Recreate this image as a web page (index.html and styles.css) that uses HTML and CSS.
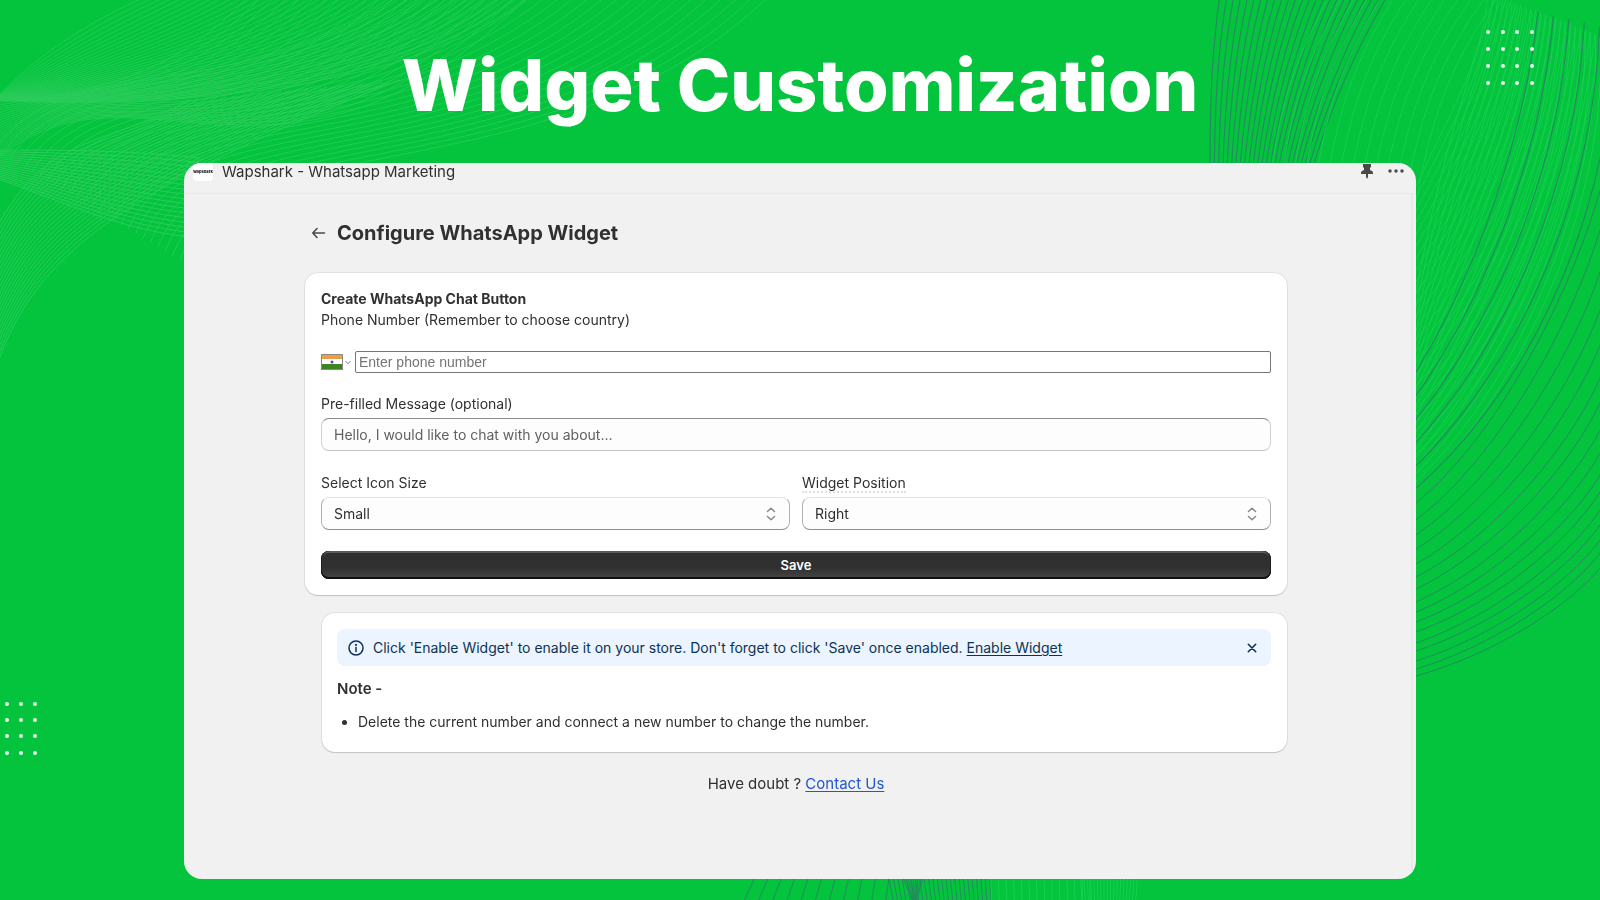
FILE: index.html
```html
<!DOCTYPE html>
<html lang="en">
<head>
<meta charset="utf-8">
<meta name="viewport" content="width=device-width, initial-scale=1">
<title>Widget Customization</title>
<link rel="stylesheet" href="styles.css">
</head>
<body class="page">
<svg class="backdrop" id="backdrop" viewBox="0 0 1600 900" preserveAspectRatio="xMidYMid slice" aria-hidden="true"></svg>
<h1 class="hero">Widget Customization</h1>
<main class="window">
  <header class="topbar">
    <span class="applogo">wapshark</span>
    <span class="appname">Wapshark - Whatsapp Marketing</span>
    <button class="iconbtn" type="button" aria-label="Pin">
      <svg width="12" height="16" viewBox="0 0 12 16"><path fill="#4a4a4a" d="M2 1h8v3l-1 1v2l2 1q1 .6 1 2v1H7v3l-1 2-1-2v-3H0v-1q0-1.400 1-2l2-1V5L2 4z"/></svg>
    </button>
    <button class="iconbtn" type="button" aria-label="More actions">
      <svg width="16" height="16" viewBox="0 0 16 16" fill="#4a4a4a"><circle cx="2" cy="8" r="1.700"/><circle cx="8" cy="8" r="1.700"/><circle cx="14" cy="8" r="1.700"/></svg>
    </button>
  </header>
  <div class="scroller">
    <div class="content">
      <div class="titlebar">
        <button class="iconbtn" type="button" aria-label="Back">
          <svg width="15" height="16" viewBox="0 0 15 16" fill="none" stroke="#4a4a4a" stroke-width="1.600" stroke-linecap="round" stroke-linejoin="round"><path d="M13.500 8H2M6 3.500 1.800 8 6 12.500"/></svg>
        </button>
        <h2 class="title">Configure WhatsApp Widget</h2>
      </div>
      <form class="card">
        <h3 class="cardtitle">Create WhatsApp Chat Button</h3>
        <label class="label" for="phone">Phone Number (Remember to choose country)</label>
        <div class="phone">
          <button class="country" type="button" aria-label="Country: India">
            <svg width="22" height="16" viewBox="0 0 22 16"><path fill="#f29b46" d="M0 0h22v5H0z"/><path fill="#fff" d="M0 5h22v5H0z"/><path fill="#3c8424" d="M0 10h22v6H0z"/><circle cx="11" cy="8" r="1.500" fill="#4a4ab8"/><path fill="none" stroke="#8a8a8a" d="M.5.5h21v15H.5z"/></svg>
            <svg width="6" height="6" viewBox="0 0 6 6"><path fill="none" stroke="#888" d="M.5 2 3 4.800 5.500 2"/></svg>
          </button>
          <input class="tel" id="phone" type="tel" placeholder="Enter phone number">
        </div>
        <label class="label" for="message">Pre-filled Message (optional)</label>
        <input class="field message" id="message" type="text" placeholder="Hello, I would like to chat with you about...">
        <div class="pair">
          <div class="group">
            <label class="label" for="size">Select Icon Size</label>
            <div class="choice">
              <select class="field" id="size"><option>Small</option><option>Medium</option><option>Large</option></select>
              <svg class="updown" width="10" height="14" viewBox="0 0 10 14"><path d="M1.500 4.500 5 1.200l3.500 3.300M1.500 9.500 5 12.800l3.500-3.300"/></svg>
            </div>
          </div>
          <div class="group">
            <label class="label" for="position"><span class="hint">Widget Position</span></label>
            <div class="choice">
              <select class="field" id="position"><option>Right</option><option>Left</option></select>
              <svg class="updown" width="10" height="14" viewBox="0 0 10 14"><path d="M1.500 4.500 5 1.200l3.500 3.300M1.500 9.500 5 12.800l3.500-3.300"/></svg>
            </div>
          </div>
        </div>
        <button class="save" type="button">Save</button>
      </form>
      <section class="card notes">
        <div class="banner">
          <svg width="16" height="16" viewBox="0 0 16 16" fill="none" stroke="#0c3354" stroke-width="1.500" stroke-linecap="round"><circle cx="8" cy="8" r="7"/><path d="M8 7.500v4"/><circle cx="8" cy="4.900" r=".4"/></svg>
          <p class="bannertext">Click 'Enable Widget' to enable it on your store. Don't forget to click 'Save' once enabled. <a class="bannerlink" href="#enable">Enable Widget</a></p>
          <button class="iconbtn" type="button" aria-label="Dismiss">
            <svg width="10" height="10" viewBox="0 0 10 10" fill="none" stroke="#0c3354" stroke-width="1.600" stroke-linecap="round"><path d="m1.300 1.300 7.400 7.400M8.700 1.300 1.300 8.700"/></svg>
          </button>
        </div>
        <h3 class="notetitle">Note -</h3>
        <ul class="list"><li>Delete the current number and connect a new number to change the number.</li></ul>
      </section>
      <p class="doubt">Have doubt ? <a class="contact" href="#contact">Contact Us</a></p>
    </div>
  </div>
</main>
<script src="script.js"></script>
</body>
</html>
```
FILE: styles.css
```css
*, *::before, *::after { box-sizing: border-box; }
h1, h2, h3, p, ul { margin: 0; }
button, input, select { font: inherit; color: inherit; }
.page {
  margin: 0;
  min-height: 100vh;
  display: flex;
  flex-direction: column;
  align-items: center;
  padding-bottom: 21px;
  background: #03c43c;
  color: #303030;
  font: 14px/21px Inter, "Liberation Sans", sans-serif;
}
.backdrop { position: fixed; inset: 0; width: 100%; height: 100%; z-index: -1; }
.hero {
  padding: 41px 16px 34px;
  color: #fff;
  font-size: 72px;
  line-height: 88px;
  font-weight: 800;
  text-align: center;
}
.window {
  width: 77%;
  flex: 1;
  display: flex;
  flex-direction: column;
  background: #f1f1f1;
  border-radius: 18px;
  overflow: hidden;
}
.topbar {
  display: flex;
  align-items: flex-start;
  gap: 9px;
  height: 31px;
  padding: 0 12px 0 9px;
  border-bottom: 1px solid #e8e8e8;
  line-height: 18px;
  font-size: 15px;
}
.applogo {
  width: 20px;
  height: 18px;
  border-radius: 0 0 4px 4px;
  background: #fff;
  color: #111;
  font-size: 4px;
  font-weight: 800;
  text-align: center;
}
.appname { flex: 1; }
.iconbtn {
  display: flex;
  align-items: center;
  justify-content: center;
  padding: 0;
  border: 0;
  background: none;
}
.topbar .iconbtn + .iconbtn { margin-left: 6px; }
.scroller { flex: 1; margin-right: 3px; padding-right: 3px; border-right: 2px solid #e9e9e9; }
.content { width: 982px; max-width: 96%; margin: 0 auto; }
.titlebar { display: flex; align-items: center; gap: 11px; padding: 25px 6px 26px; }
.title { font-size: 20px; line-height: 28px; font-weight: 700; }
.card {
  display: flex;
  flex-direction: column;
  padding: 16px;
  border-radius: 13px;
  background: #fff;
  box-shadow: 0 1px 1px #c4c4c4, 0 0 0 1px #e2e2e2;
}
.cardtitle { font-size: 14px; line-height: 20px; font-weight: 700; }
.phone { display: flex; align-items: center; gap: 4px; margin: 21px 0 20px; }
.country { display: flex; align-items: center; gap: 2px; padding: 0; border: 0; background: none; }
.tel {
  flex: 1;
  min-width: 0;
  height: 22px;
  padding: 0 3px;
  border: 1px solid #767676;
  border-radius: 2px;
  font: 14px "Liberation Sans", Arial, sans-serif;
}
.tel::placeholder { color: #757575; }
.field {
  width: 100%;
  height: 33px;
  padding: 0 12px;
  border: 1px solid #a6a6a6;
  border-radius: 8px;
  background: #fdfdfd;
  appearance: none;
}
.message { margin: 4px 0 21px; border-color: #8a8a8a #d0d0d0 #c4c4c4; }
.message::placeholder { color: #616161; opacity: 1; }
.pair { display: grid; grid-template-columns: 1fr 1fr; gap: 12px; }
.group { display: flex; flex-direction: column; gap: 4px; }
.choice { display: grid; align-items: center; }
.choice > * { grid-area: 1 / 1; }
.choice .field { border-color: #e3e3e3 #b0b0b0 #8f8f8f; }
.updown {
  justify-self: end;
  margin-right: 14px;
  pointer-events: none;
  fill: none;
  stroke: #8a8a8a;
  stroke-width: 1.5;
  stroke-linecap: round;
  stroke-linejoin: round;
}
.hint { border-bottom: 2px dotted #e0e0e0; }
.save {
  height: 28px;
  margin-top: 21px;
  padding: 0;
  border: 0;
  border-radius: 8px;
  background: linear-gradient(#303030 60%, #474747);
  box-shadow: inset 0 -2px 0 #111, inset 1px 0 0 #1c1c1c, inset -1px 0 0 #1c1c1c, inset 0 2px 0 #5a5a5a;
  color: #fff;
  font-size: 13px;
  font-weight: 600;
}
.notes { margin: 18px 0 0 17px; padding-bottom: 20px; padding-left: 15px; }
.banner {
  display: flex;
  align-items: center;
  gap: 9px;
  padding: 8px 14px 8px 11px;
  border-radius: 8px;
  background: #ebf4ff;
  color: #0c3354;
}
.bannertext { flex: 1; }
.bannerlink { color: inherit; text-underline-offset: 2px; }
.notetitle { margin-top: 12px; font-size: 15px; font-weight: 600; }
.list { padding: 12px 0 0 21px; }
.doubt { padding-top: 21px; text-align: center; font-size: 15px; }
.contact { color: #2157cf; text-underline-offset: 2px; }
```
FILE: script.js
```js
const svg = document.getElementById("backdrop");
const DARK = "#258a60";
const LIGHT = "#2ccc5c";
const FAINT = "#14d050";

function add(name, attrs) {
  const el = document.createElementNS("http://www.w3.org/2000/svg", name);
  for (const key in attrs) el.setAttribute(key, attrs[key]);
  svg.appendChild(el);
}

// Each family blends n cubic curves between the curves a and b.
const families = [
  // top left wave
  [[-5,100, 30,60, 90,20, 150,-5], [-5,100, 160,110, 420,90, 530,-5], 40, LIGHT, 0.8],
  [[-5,103, 90,92, 170,80, 250,-5], [-5,160, 140,40, 280,240, 530,-5], 22, LIGHT, 0.8],
  [[-5,150, 60,50, 230,110, 400,-5], [180,260, 230,120, 560,200, 770,-5], 26, LIGHT, 0.8],
  [[-5,150, 60,150, 130,150, 200,158], [-5,178, 60,200, 120,230, 190,237], 18, LIGHT, 1],
  [[-5,230, 50,130, 100,150, 190,100], [-5,370, 30,270, 90,200, 400,80], 24, LIGHT, 1],
  // top right
  [[1220,-5, 1212,50, 1210,100, 1210,170], [1388,-5, 1355,50, 1330,110, 1312,170], 25, DARK, 1.1],
  [[1330,-5, 1300,50, 1280,100, 1272,170], [1500,-5, 1460,50, 1430,100, 1410,240], 14, FAINT, 0.9],
  [[1496,-5, 1460,100, 1430,200, 1410,330], [1600,36, 1610,210, 1510,410, 1410,495], 22, FAINT, 1],
  [[1488,-5, 1480,70, 1450,110, 1410,200], [1600,36, 1580,200, 1510,370, 1410,460], 24, FAINT, 0.9],
  [[1538,12, 1525,130, 1480,270, 1410,382], [1615,30, 1610,230, 1520,400, 1410,494], 6, DARK, 1.2],
  // bottom edge
  [[758,870, 752,885, 744,900, 738,915], [890,870, 888,885, 886,900, 884,915], 11, DARK, 1],
  [[888,870, 890,885, 893,900, 896,915], [989,870, 990,885, 991,900, 992,915], 24, DARK, 1],
  [[900,870, 906,885, 912,900, 918,915], [925,870, 921,885, 917,900, 913,915], 9, DARK, 1],
  [[990,870, 991,885, 992,900, 992,915], [1090,870, 1090,885, 1090,900, 1090,915], 14, FAINT, 1],
  [[1080,870, 1081,885, 1082,900, 1083,915], [1138,870, 1137,885, 1136,900, 1134,915], 18, FAINT, 1]
];

for (const [a, b, n, stroke, width] of families) {
  for (let i = 0; i < n; i++) {
    const p = a.map((v, k) => (v + (b[k] - v) * i / (n - 1)).toFixed(1));
    add("path", {
      d: `M${p[0]} ${p[1]}C${p.slice(2).join(" ")}`,
      fill: "none", stroke, "stroke-width": width
    });
  }
}

// outer right arcs: height at the right edge, height at the window's edge
const arcs = [[190,503],[230,520],[272,535],[310,549],[345,564],[378,577],[403,589],[430,602],
  [453,612],[475,622],[492,632],[510,643],[525,651],[540,661],[553,669],[568,676]];
for (const [right, left] of arcs) {
  const h = left - right;
  add("path", {
    d: `M1600 ${right}C${1572} ${right + h * 0.32} ${1500} ${right + h * 0.78} 1416 ${left}`,
    fill: "none", stroke: DARK, "stroke-width": 1
  });
}

function dots(xs, ys, r) {
  for (const cx of xs) for (const cy of ys) add("circle", { cx, cy, r, fill: "#e9fbef" });
}
dots([1488, 1503, 1517, 1532], [32, 49, 66, 83], 2);
dots([7, 21, 35], [704, 720, 736, 753], 2);
```
